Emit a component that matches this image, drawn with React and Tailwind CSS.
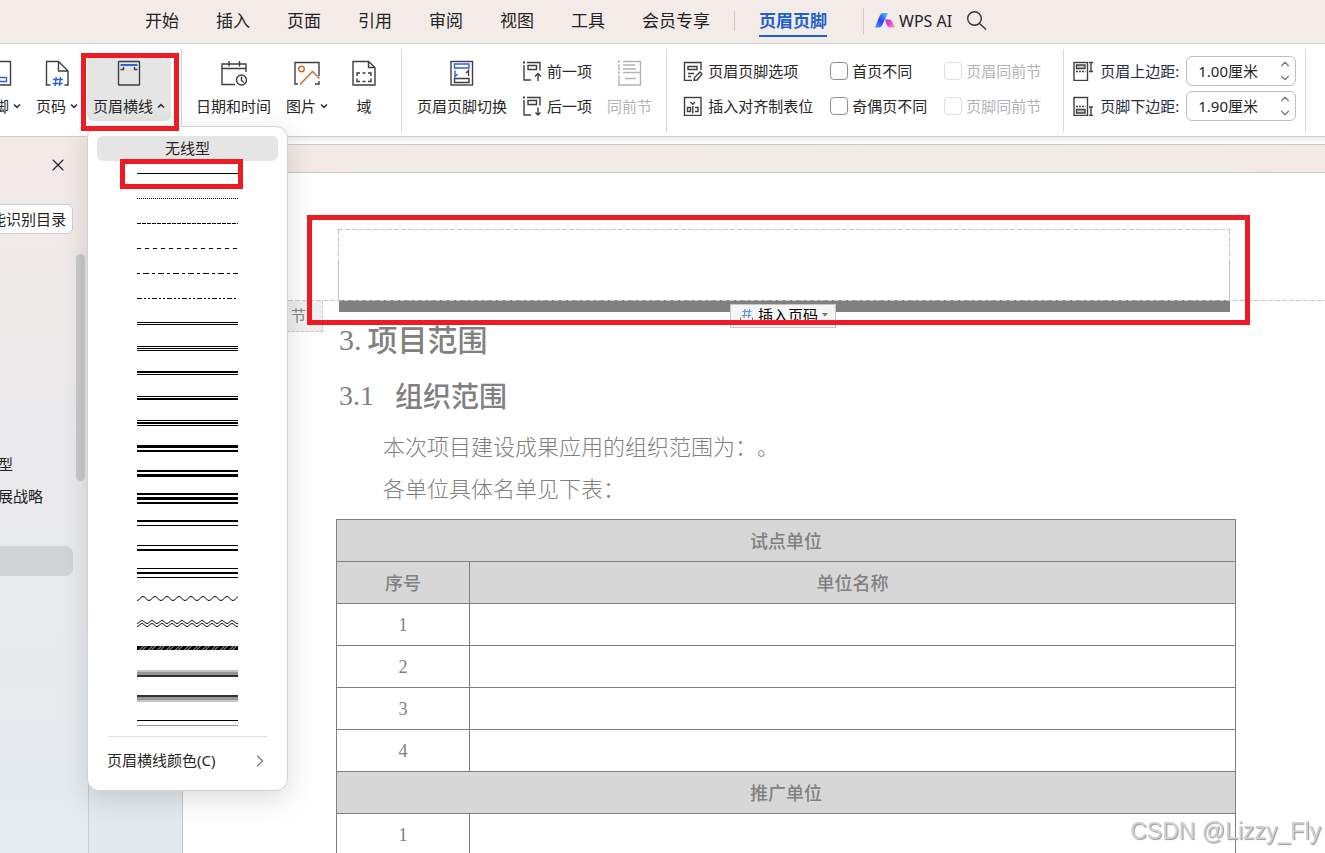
import { useState } from "react";
import { ChevronDown, ChevronRight, ChevronUp, X } from "lucide-react";

const tabs = ["开始", "插入", "页面", "引用", "审阅", "视图", "工具", "会员专享"];

// bars: [top, height, color]
const strokes = [
  { name: "细实线", bars: [[12, 1]] },
  { name: "点线", dash: "1 1" },
  { name: "短划线", dash: "4 1" },
  { name: "虚线", dash: "4 4" },
  { name: "点划线", dash: "3 3 6 3" },
  { name: "双点划线", dash: "5 2 2 2 2 2" },
  { name: "双线", bars: [[11, 1], [13, 1]] },
  { name: "三线", bars: [[10, 1], [12, 1], [14, 1]] },
  { name: "上粗下细", bars: [[10, 2], [13, 1]] },
  { name: "上细下粗", bars: [[10, 1], [12, 2]] },
  { name: "中粗三线", bars: [[9, 1], [11, 2], [14, 1]] },
  { name: "粗细双线", bars: [[9, 3], [14, 2]] },
  { name: "细粗双线", bars: [[9, 2], [13, 3]] },
  { name: "粗三线", bars: [[7, 2], [11, 3], [16, 2]] },
  { name: "宽距粗细", bars: [[9, 2], [14, 1]] },
  { name: "宽距细粗", bars: [[9, 1], [13, 2]] },
  { name: "宽距三线", bars: [[7, 1], [11, 2], [16, 1]] },
  { name: "波浪线", wave: [12.5] },
  { name: "双波浪线", wave: [11, 14] },
  { name: "斜纹线", hatch: true },
  { name: "浮雕", bars: [[9, 2, "#c4c4c4"], [11, 3, "#969696"], [14, 2, "#333"]] },
  { name: "雕刻", bars: [[9, 2, "#333"], [11, 3, "#969696"], [14, 2, "#c4c4c4"]] },
  { name: "阴影线", bars: [[9, 1], [14, 1, "#999"]] },
];

const rows = [
  { section: "试点单位" },
  { head: true },
  { no: 1 },
  { no: 2 },
  { no: 3 },
  { no: 4 },
  { section: "推广单位" },
  { no: 1 },
];

function wavePath(y, half, amp) {
  let d = `M0 ${y + amp}`;
  for (let x = 0, up = true; x < 101; x += half, up = !up) {
    const from = up ? y + amp : y - amp;
    const to = up ? y - amp : y + amp;
    d += ` C${x + half / 2} ${from} ${x + half / 2} ${to} ${x + half} ${to}`;
  }
  return d;
}

function StrokeSample({ stroke }) {
  return (
    <svg width="101" height="25" viewBox="0 0 101 25" className="shrink-0" aria-hidden="true">
      {stroke.bars?.map(([y, h, color]) => (
        <rect key={y} y={y} width="101" height={h} fill={color || "#000"} />
      ))}
      {stroke.dash && (
        <path d="M0 12.5H101" stroke="#000" strokeDasharray={stroke.dash} shapeRendering="crispEdges" />
      )}
      {stroke.wave?.map((y) => (
        <path
          key={y}
          d={wavePath(y, stroke.wave.length > 1 ? 5 : 6, stroke.wave.length > 1 ? 1.5 : 2)}
          fill="none"
          stroke="#000"
        />
      ))}
      {stroke.hatch && (
        <>
          <rect y="10" width="101" height="4" fill="#000" />
          {[...Array(12)].map((_, i) => (
            <path key={i} d={`M${i * 9 + 2} 14.5l5 -5M${i * 9 + 5} 14.5l5 -5`} stroke="#fff" strokeWidth="0.8" />
          ))}
        </>
      )}
    </svg>
  );
}

function Icon({ size = 26, children, color = "#3f3f3f" }) {
  return (
    <svg
      width={size}
      height={size}
      viewBox={`0 0 ${size} ${size}`}
      fill="none"
      stroke={color}
      strokeWidth="1.4"
      className="shrink-0"
      aria-hidden="true"
    >
      {children}
    </svg>
  );
}

const blue = "#2f5fe0";
const orange = "#d2622a";

function FooterIcon() {
  return (
    <Icon>
      <path d="M2 1.500H23.500V25H2z" />
      <path d="M6 17.500H19.500V21.500H6z" stroke={blue} />
    </Icon>
  );
}

function PageNumberIcon() {
  return (
    <Icon>
      <path d="M6.500 25H2.500V1.500H14.500L24 11V25H20.500M14.500 1.500V11H24" />
      <path d="M9 19.500H19M8.500 23.500H18.500M12.200 17L11.200 26M16.500 17L15.500 26" stroke={blue} />
    </Icon>
  );
}

function HeaderLineIcon() {
  return (
    <Icon>
      <rect x="2.500" y="1.500" width="21" height="23.500" rx="0.500" />
      <path d="M4.500 5H21.500" stroke={blue} strokeWidth="2" />
      <path d="M4.500 9.500H7.500V7M21.500 9.500H18.500V7" />
    </Icon>
  );
}

function DateTimeIcon() {
  return (
    <Icon>
      <path d="M14 24.500H1V4H25V12M1 8.500H25M8 1V6.500M18.500 1V6.500" />
      <circle cx="20.500" cy="20" r="5" />
      <path d="M20.500 16.500V20.500L23 22.500" />
    </Icon>
  );
}

function PictureIcon() {
  return (
    <Icon>
      <path d="M4 24H1V2.500H25V16M21 24H25V21" />
      <circle cx="7.500" cy="9" r="2.800" stroke={orange} />
      <path d="M6 24.500L18.500 11.500L25.500 18.500" stroke={orange} />
    </Icon>
  );
}

function FieldIcon() {
  return (
    <Icon>
      <path d="M2 1.500H17.500L24 7.500V25H2zM17.500 1.500V7.500H24" />
      <path d="M6 16V13H9M11.500 13H14.500M17 13H20V16M20 18.500V21.500H17M14.500 21.500H11.500M9 21.500H6V18.500" />
    </Icon>
  );
}

function SwitchIcon() {
  return (
    <Icon>
      <rect x="2" y="1.500" width="21.500" height="23.500" />
      <path d="M5.500 4H20V8H5.500z" stroke={blue} />
      <path d="M6 10.500V16.500L8.500 14" stroke={blue} />
      <path d="M17 13L19.500 10.500V16M5.500 18.500H20V22.500H5.500z" />
    </Icon>
  );
}

function SameSectionIcon() {
  return (
    <Icon color="#b3b3b3">
      <path d="M6 1.500H23.500V12.500H6M2 4V10M2 15V25H23.500V12.500M6 5H18M6 9H19M8 18.500H19" />
      <path d="M1 1.500H3M1 12.500H3" strokeWidth="2" />
    </Icon>
  );
}

function SectionStepIcon({ next }) {
  return (
    <Icon size={20}>
      <path d="M5 1.500H18V9.500M2 4V19H9" />
      <path d="M1 1.500H3" strokeWidth="2" />
      <path d="M6 4.500H14.500V8.500H6z" />
      <path d={next ? "M16 11.500V19M13.500 16.500L16 19L18.500 16.500" : "M16 20V12.500M13 15.500L16 12.500L19 15.500"} />
    </Icon>
  );
}

function OptionsIcon() {
  return (
    <Icon size={20}>
      <path d="M9 19.500H1.500V1.500H18V9M5 5.500H14V8.500H5zM5 12.500H11M5 15.500H8" />
      <path d="M11 19.500L11.500 16.500L17 11L19 13L14 19L11 19.500z" />
    </Icon>
  );
}

function AlignTabIcon() {
  return (
    <Icon size={20}>
      <rect x="1.500" y="1.500" width="16.500" height="18" />
      <path d="M7.500 6L9.800 8.300L12 6M9.800 10V17.500M7.500 15.500V11.500H4.500V15.500H7.500zM12 11.500H15V15.500H12" />
    </Icon>
  );
}

function MarginIcon({ bottom }) {
  return (
    <Icon size={20}>
      <rect x="1" y="1.500" width="13.500" height="18" />
      <path d="M3 10.500H12.500" strokeDasharray="2 1" />
      {bottom ? (
        <>
          <path d="M3.500 13.500H12V17H3.500z" fill="#c9c9c9" />
          <path d="M16 11H20M18 11V19M16 19.500H20" />
        </>
      ) : (
        <>
          <path d="M3.500 4H12V7.500H3.500z" fill="#c9c9c9" />
          <path d="M16 1.500H20M18 1.500V10M16 10.500H20" />
        </>
      )}
    </Icon>
  );
}

function Caret({ up }) {
  return (
    <svg width="8" height="6" viewBox="0 0 8 6" fill="none" stroke="#333" strokeWidth="1.700" aria-hidden="true">
      <path d={up ? "M1 4.500L4 1.700L7 4.500" : "M1 1.500L4 4.300L7 1.500"} />
    </svg>
  );
}

function AiLogo() {
  return (
    <svg width="20" height="16" viewBox="0 0 20 16" className="shrink-0" aria-hidden="true">
      <defs>
        <linearGradient id="aiBlue" x1="0" y1="1" x2="0.8" y2="0">
          <stop offset="0" stopColor="#4aa3ff" />
          <stop offset="0.5" stopColor="#2b3dfa" />
          <stop offset="1" stopColor="#35c8f5" />
        </linearGradient>
        <linearGradient id="aiPink" x1="0" y1="0" x2="1" y2="1">
          <stop offset="0" stopColor="#b026f5" />
          <stop offset="0.5" stopColor="#f03fd0" />
          <stop offset="1" stopColor="#ffae8a" />
        </linearGradient>
      </defs>
      <path d="M5 2Q6 0 8 0H13L7 12.500Q6 14.500 4 14.500H0z" fill="url(#aiBlue)" />
      <path d="M10 6.500H14Q16 6.500 17 8.500L20 14.500H15Q13 14.500 12 12.500z" fill="url(#aiPink)" />
    </svg>
  );
}

function BigButton({ icon, label, arrow, disabled, active }) {
  return (
    <button
      disabled={disabled}
      className={`flex h-[65px] min-w-[54px] shrink-0 flex-col items-center gap-[10px] rounded-md px-1.5 pt-1 ${
        active ? "bg-[#e5e5e5]" : ""
      } ${disabled ? "text-[#b3b3b3]" : ""}`}
    >
      {icon}
      <span className="flex items-center gap-1 leading-5 whitespace-nowrap">
        {label}
        {arrow && <Caret up={arrow === "up"} />}
      </span>
    </button>
  );
}

function SmallButton({ icon, label }) {
  return (
    <button className="flex h-[30px] items-center gap-[5px] whitespace-nowrap">
      {icon}
      {label}
    </button>
  );
}

function CheckOption({ label, disabled }) {
  return (
    <label
      className={`flex h-[30px] items-center gap-1 whitespace-nowrap ${disabled ? "text-[#b3b3b3]" : ""}`}
    >
      <input
        type="checkbox"
        disabled={disabled}
        className={`h-[18px] w-[18px] appearance-none rounded border checked:bg-[#2f5fe0] ${
          disabled ? "border-[#dedede]" : "border-[#8f8f8f]"
        }`}
      />
      {label}
    </label>
  );
}

function MarginField({ id, label, icon, initial }) {
  const [value, setValue] = useState(initial);

  const step = (delta) => setValue(`${Math.max(0, parseFloat(value) + delta).toFixed(2)}厘米`);

  return (
    <div className="flex h-[30px] items-center gap-[7px]">
      {icon}
      <label htmlFor={id} className="whitespace-nowrap text-[#1f2a44]">
        {label}
      </label>
      <div className="flex h-[30px] w-[110px] items-center rounded-md border border-[#bdbdbd] bg-white pr-[3px] pl-[11px]">
        <input
          id={id}
          value={value}
          onChange={(event) => setValue(event.target.value)}
          className="min-w-0 flex-1 bg-transparent leading-5 outline-none"
        />
        <div className="flex flex-col text-[#777]">
          <button aria-label="增加" onClick={() => step(0.1)}>
            <ChevronUp size={14} strokeWidth={2} />
          </button>
          <button aria-label="减少" onClick={() => step(-0.1)}>
            <ChevronDown size={14} strokeWidth={2} />
          </button>
        </div>
      </div>
    </div>
  );
}

function LineMenu() {
  return (
    <div
      role="menu"
      className="absolute top-[70px] left-0 z-20 flex w-[201px] flex-col rounded-xl border border-[#d2d2d2] bg-white px-[9px] pt-[9px] pb-1.5 shadow-[0_8px_28px_rgba(0,0,0,0.14)]"
    >
      <button role="menuitem" className="h-[25px] rounded-md bg-[#e5e5e5] leading-[25px]">
        无线型
      </button>
      {strokes.map((stroke) => (
        <button
          key={stroke.name}
          role="menuitem"
          aria-label={stroke.name}
          className="flex h-[25px] justify-center rounded-md hover:bg-gray-100"
        >
          <StrokeSample stroke={stroke} />
        </button>
      ))}
      <div className="mx-[11px] h-px bg-[#e0e0e0]" />
      <button role="menuitem" className="flex h-[47px] items-center justify-between pr-2 pl-[10px]">
        <span>页眉横线颜色(C)</span>
        <ChevronRight size={20} strokeWidth={1.4} className="text-[#777]" />
      </button>
      <div className="absolute top-8 left-8 h-[30px] w-[123px] border-[5px] border-[#ed1c24]" />
    </div>
  );
}

function Ribbon() {
  return (
    <div className="flex h-[94px] shrink-0 border-t border-b border-[#d8d0cc] border-b-[#cfcbc8] bg-white pt-[5px] pb-1 text-[15px] text-[#262626]">
      <div className="flex shrink-0 gap-[3px] border-r border-[#d9d9d9] py-[7px] pr-[10px]">
        <div className="-ml-[27px] flex gap-[3px]">
          <BigButton icon={<FooterIcon />} label="页脚" arrow="down" />
          <BigButton icon={<PageNumberIcon />} label="页码" arrow="down" />
        </div>
        <div className="relative">
          <BigButton icon={<HeaderLineIcon />} label="页眉横线" arrow="up" active />
          <LineMenu />
          <div className="absolute -top-[3px] -right-2 -left-1.5 z-30 h-[78px] border-[5px] border-[#ed1c24]" />
        </div>
      </div>

      <div className="flex shrink-0 gap-[3px] border-r border-[#d9d9d9] py-[7px] pr-[10px] pl-2">
        <BigButton icon={<DateTimeIcon />} label="日期和时间" />
        <BigButton icon={<PictureIcon />} label="图片" arrow="down" />
        <BigButton icon={<FieldIcon />} label="域" />
      </div>

      <div className="flex shrink-0 gap-[3px] border-r border-[#d9d9d9] py-[7px] pr-2 pl-[9px]">
        <BigButton icon={<SwitchIcon />} label="页眉页脚切换" />
        <div className="flex flex-col gap-[5px] px-1.5">
          <SmallButton icon={<SectionStepIcon />} label="前一项" />
          <SmallButton icon={<SectionStepIcon next />} label="后一项" />
        </div>
        <BigButton icon={<SameSectionIcon />} label="同前节" disabled />
      </div>

      <div className="flex shrink-0 gap-[17px] border-r border-[#d9d9d9] py-[7px] pr-[22px] pl-4">
        <div className="flex flex-col gap-[5px]">
          <SmallButton icon={<OptionsIcon />} label="页眉页脚选项" />
          <SmallButton icon={<AlignTabIcon />} label="插入对齐制表位" />
        </div>
        <div className="flex flex-col gap-[5px]">
          <CheckOption label="首页不同" />
          <CheckOption label="奇偶页不同" />
        </div>
        <div className="flex flex-col gap-[5px]">
          <CheckOption label="页眉同前节" disabled />
          <CheckOption label="页脚同前节" disabled />
        </div>
      </div>

      <div className="flex shrink-0 flex-col gap-[5px] border-r border-[#d9d9d9] px-[9px] py-[7px]">
        <MarginField id="header-margin" label="页眉上边距:" icon={<MarginIcon />} initial="1.00厘米" />
        <MarginField id="footer-margin" label="页脚下边距:" icon={<MarginIcon bottom />} initial="1.90厘米" />
      </div>
    </div>
  );
}

function TopTabs() {
  return (
    <nav className="flex h-[43px] shrink-0 items-center bg-[#f3ebe8] pb-0.5 pl-[145px] text-[17px] whitespace-nowrap text-[#222]">
      <div className="flex gap-[37px]">
        {tabs.map((tab) => (
          <button key={tab}>{tab}</button>
        ))}
      </div>
      <div className="mx-6 h-5 w-px bg-[#cfc8c5]" />
      <button className="mt-1 border-b-2 border-[#1f5fd0] pb-0.5 font-bold text-[#1f5fd0]">页眉页脚</button>
      <div className="ml-9 h-[26px] w-px bg-[#cfc8c5]" />
      <button className="ml-[11px] flex items-center gap-1 text-base">
        <AiLogo />
        WPS AI
      </button>
      <button aria-label="搜索" className="ml-[14px]">
        <svg width="22" height="22" viewBox="0 0 22 22" fill="none" stroke="#333" strokeWidth="1.400" aria-hidden="true">
          <circle cx="8.500" cy="8.500" r="6.800" />
          <path d="M13.500 13.500L20 19.500" />
        </svg>
      </button>
    </nav>
  );
}

function Sidebar() {
  return (
    <aside className="flex w-[89px] shrink-0 overflow-hidden border-r border-[#c9cccf] bg-linear-to-b from-[#f2eae7] via-[#ebeaec] via-40% to-[#e5ebef] text-[15px] text-[#222]">
      <div className="flex w-[73px] flex-col items-end">
        <button aria-label="关闭" className="mt-[18px] mr-[5px]">
          <X size={20} strokeWidth={1.4} />
        </button>
        <button className="mt-[29px] h-[30px] rounded-md border border-[#cfcfcf] bg-white pr-1.5 pl-3 whitespace-nowrap">
          能识别目录
        </button>
        <ul className="mt-[214px] w-full">
          <li className="-ml-0.5 h-8 leading-8">型</li>
          <li className="-ml-0.5 h-8 leading-8">展战略</li>
          <li className="mt-[34px] h-[30px] rounded-r-lg bg-[#d0d4d6]" />
        </ul>
      </div>
      <div className="mt-[117px] ml-[3px] h-[227px] w-[9px] rounded-full bg-[#c9c9cb]" />
    </aside>
  );
}

function DocumentTable() {
  return (
    <table className="w-full table-fixed border-collapse text-lg">
      <colgroup>
        <col className="w-[133px]" />
        <col />
      </colgroup>
      <tbody>
        {rows.map((row, index) => {
          if (row.section) {
            return (
              <tr key={index} className="h-[42px] bg-[#d7d7d7]">
                <th colSpan={2} className="border border-[#7f7f7f] p-0 font-medium">
                  {row.section}
                </th>
              </tr>
            );
          }
          if (row.head) {
            return (
              <tr key={index} className="h-[42px] bg-[#d7d7d7]">
                <th className="border border-[#7f7f7f] p-0 font-medium">序号</th>
                <th className="border border-[#7f7f7f] p-0 font-medium">单位名称</th>
              </tr>
            );
          }
          return (
            <tr key={index} className="h-[42px]">
              <td className="border border-[#7f7f7f] p-0 text-center font-['Liberation_Serif','Noto_Sans_CJK_SC',serif]">
                {row.no}
              </td>
              <td className="border border-[#7f7f7f] p-0" />
            </tr>
          );
        })}
      </tbody>
    </table>
  );
}

function PageHeaderArea() {
  return (
    <div className="relative pt-14">
      <div className="mr-[95px] ml-[155px] h-[71px]">
        <div className="h-px bg-[repeating-linear-gradient(90deg,#c6c6c6_0_5px,transparent_5px_7px)]" />
        <div className="flex h-8 justify-between">
          <div className="w-px bg-[repeating-linear-gradient(#c6c6c6_0_5px,transparent_5px_7px)]" />
          <div className="w-px bg-[repeating-linear-gradient(#c6c6c6_0_5px,transparent_5px_7px)]" />
        </div>
        <div className="h-[38px] border-x border-[#c6c6c6]" />
      </div>
      <div className="mr-[95px] ml-[156px] h-3 bg-[#808080]" />
      <div className="absolute bottom-[11px] left-0 h-px w-full bg-[repeating-linear-gradient(90deg,#c6c6c6_0_5px,transparent_5px_7px)]" />

      <div className="absolute top-[128px] left-[104px] h-[31px] w-9 border-r border-b border-dashed border-[#c6c6c6] bg-[#efefef] pl-1 text-[15px] leading-7 text-[#808080]">
        节
      </div>
      <button className="absolute top-[131px] left-[547px] flex h-6 w-[106px] items-center gap-1 border border-[#c6c6c6] bg-[#f5f5f5] pb-0.5 pl-2 text-[15px] leading-5 whitespace-nowrap text-black">
        <svg width="15" height="16" viewBox="0 0 15 16" fill="none" aria-hidden="true">
          <path d="M3.500 4.500H12.500M3 8.500H12M6 2L5 11M10.500 2L9.500 11" stroke="#5f8fe8" strokeWidth="1.200" />
          <path d="M1.500 10.500V14.500H13.500V10.500" stroke="#777" />
        </svg>
        插入页码
        <svg width="6" height="4" viewBox="0 0 6 4" aria-hidden="true">
          <path d="M0 0H6L3 3.500z" fill="#66758f" />
        </svg>
      </button>
      <div className="absolute top-[42px] right-[75px] left-[124px] h-[110px] border-[5px] border-[#ed1c24]" />
    </div>
  );
}

export default function App() {
  return (
    <div className="flex h-screen flex-col overflow-hidden bg-white font-['Noto_Sans','Noto_Sans_CJK_SC',sans-serif]">
      <TopTabs />
      <Ribbon />

      <div className="flex min-h-0 flex-1">
        <Sidebar />

        <div className="flex min-w-0 flex-1 flex-col overflow-hidden">
          <div className="h-[7px] shrink-0 bg-linear-to-b from-[#ededed] to-white" />
          <div className="h-[29px] shrink-0 border-y border-[#c8c8c8] bg-linear-to-r from-[#f3e9e6] via-[#f0ebe5] via-75% to-[#f3e9e5]" />
          <div className="flex min-h-0 flex-1">
            <div className="w-[94px] shrink-0 border-r border-[#c4c8cb] bg-[#e4e9ed]" />
            <main className="min-w-0 flex-1 bg-white text-[#808080]">
              <PageHeaderArea />
              <div className="pr-[89px] pl-[153px]">
                <h2 className="flex h-14 items-center gap-1.5 px-[3px] text-[30px] leading-[56px] font-medium">
                  <span className="font-['Liberation_Serif',serif]">3.</span>
                  <span>项目范围</span>
                </h2>
                <h3 className="flex h-14 items-center gap-[21px] px-[3px] text-[28px] leading-[56px] font-medium">
                  <span className="font-['Liberation_Serif',serif]">3.1</span>
                  <span>组织范围</span>
                </h3>
                <div className="mt-px mb-[10px] pl-[47px] text-[22px] leading-[42px] font-light [text-spacing-trim:space-all]">
                  <p>本次项目建设成果应用的组织范围为：。</p>
                  <p>各单位具体名单见下表：</p>
                </div>
                <DocumentTable />
              </div>
            </main>
          </div>
        </div>
      </div>

      <div className="pointer-events-none fixed right-1 bottom-1.5 text-[23px] leading-8 text-[#d0d0d0] font-['Liberation_Sans',sans-serif] text-shadow-[1px_1px_1px_#999]">
        CSDN @Lizzy_Fly
      </div>
    </div>
  );
}
